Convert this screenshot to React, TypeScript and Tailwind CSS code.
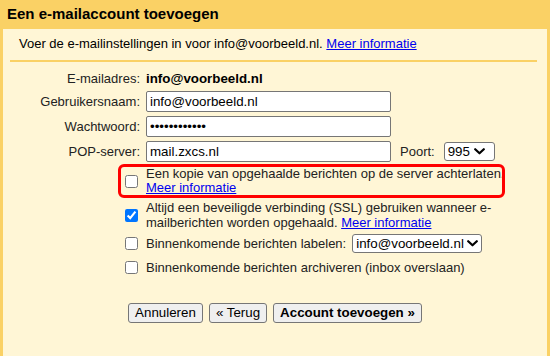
import type { ReactNode } from 'react'

function Chevron() {
  return (
    <svg width="11" height="7" viewBox="0 0 11 7" className="shrink-0">
      <path d="M1.2 1.2 L5.5 5.3 L9.8 1.2" fill="none" stroke="#000" strokeWidth="2.2" strokeLinecap="round" strokeLinejoin="round" />
    </svg>
  )
}

interface FieldRowProps {
  label:     string
  className: string
  children:  ReactNode
}

function FieldRow({ label, className, children }: FieldRowProps) {
  return (
    <div className={className}>
      <div className="w-[137px] shrink-0 text-right text-[13px]">{label}</div>
      <div className="ml-[6px] flex items-center">{children}</div>
    </div>
  )
}

function TextInput({ value, type = 'text' }: { value: string; type?: string }) {
  return (
    <input
      type={type}
      defaultValue={value}
      className="w-[245px] h-[21px] border border-[#767676] rounded-[2px] bg-white px-[3px] text-[13.33px] text-black outline-none"
    />
  )
}

function Check({ checked = false }: { checked?: boolean }) {
  return (
    <div className="w-[137px] shrink-0 flex justify-end pr-[2px]">
      <input type="checkbox" defaultChecked={checked} className="w-[13px] h-[13px] m-0" />
    </div>
  )
}

function Button({ children, bold = false }: { children: ReactNode; bold?: boolean }) {
  return (
    <button
      className={
        bold
          ? 'h-[20px] px-[6px] border border-[#767676] rounded-[3px] bg-[#efefef] text-[13.33px] leading-none text-black font-bold'
          : 'h-[20px] px-[6px] border border-[#767676] rounded-[3px] bg-[#efefef] text-[13.33px] leading-none text-black'
      }
    >
      {children}
    </button>
  )
}

export default function App() {
  return (
    <div className="w-[550px] h-[356px] bg-[#fad165] flex flex-col overflow-hidden font-['Liberation_Sans',Arial,sans-serif] text-[#222]">
      {/* Titel */}
      <div className="h-[29px] shrink-0 flex items-center pl-[7px] text-[15px] font-bold text-black">
        Een e-mailaccount toevoegen
      </div>

      {/* Paneel */}
      <div className="flex-1 mx-[3px] bg-[#fff6d6] flex flex-col">
        <p className="pt-[7px] pl-[16px] text-[13px] leading-[16px] text-black">
          Voer de e-mailinstellingen in voor info@voorbeeld.nl.{' '}
          <a href="#" className="text-[#0000ee] underline">Meer informatie</a>
        </p>
        <div className="mt-[8px] ml-[7px] mr-[10px] h-[2px] bg-[#fad165]" />

        <FieldRow label="E-mailadres:" className="mt-[7px] h-[20px] flex items-center">
          <span className="text-[13.33px] font-bold text-black">info@voorbeeld.nl</span>
        </FieldRow>
        <FieldRow label="Gebruikersnaam:" className="mt-[2px] h-[21px] flex items-center">
          <TextInput value="info@voorbeeld.nl" />
        </FieldRow>
        <FieldRow label="Wachtwoord:" className="mt-[4px] h-[21px] flex items-center">
          <TextInput value="geheimwoord1" type="password" />
        </FieldRow>
        <FieldRow label="POP-server:" className="mt-[4px] h-[21px] flex items-center">
          <TextInput value="mail.zxcs.nl" />
          <span className="ml-[9px] text-[13px]">Poort:</span>
          <div className="ml-[9px] w-[51px] h-[19px] border border-[#767676] rounded-[3px] bg-white flex items-center justify-between pl-[3px] pr-[9px] text-[13.33px] text-black">
            <span>995</span>
            <Chevron />
          </div>
        </FieldRow>

        {/* Opties */}
        <div className="relative mt-[5px] flex items-center">
          <Check />
          <div className="ml-[6px] w-[360px] text-[13px] leading-[14px]">
            Een kopie van opgehaalde berichten op de server achterlaten.{' '}
            <a href="#" className="text-[#0000ee] underline">Meer informatie</a>
          </div>
          <div className="absolute left-[115px] -top-[3px] w-[387px] h-[34px] border-[3px] border-[#ff0000] rounded-[6px] pointer-events-none" />
        </div>

        <div className="mt-[5px] flex items-center">
          <Check checked />
          <div className="ml-[6px] w-[360px] text-[13px] leading-[15px]">
            Altijd een beveiligde verbinding (SSL) gebruiken wanneer e-mailberichten worden opgehaald.{' '}
            <a href="#" className="text-[#0000ee] underline">Meer informatie</a>
          </div>
        </div>

        <div className="mt-[4px] h-[19px] flex items-center">
          <Check />
          <span className="ml-[6px] text-[13px]">Binnenkomende berichten labelen:</span>
          <div className="ml-[6px] w-[130px] h-[19px] border border-[#767676] rounded-[3px] bg-white flex items-center justify-between pl-[3px] pr-[3px] text-[13.33px] text-black">
            <span>info@voorbeeld.nl</span>
            <Chevron />
          </div>
        </div>

        <div className="mt-[7px] flex items-center">
          <Check />
          <span className="ml-[6px] text-[13px] leading-[15px]">
            Binnenkomende berichten archiveren (inbox overslaan)
          </span>
        </div>

        {/* Knoppen */}
        <div className="mt-[28px] flex justify-center gap-[6px]">
          <Button>Annuleren</Button>
          <Button>« Terug</Button>
          <Button bold>Account toevoegen »</Button>
        </div>
      </div>
    </div>
  )
}
